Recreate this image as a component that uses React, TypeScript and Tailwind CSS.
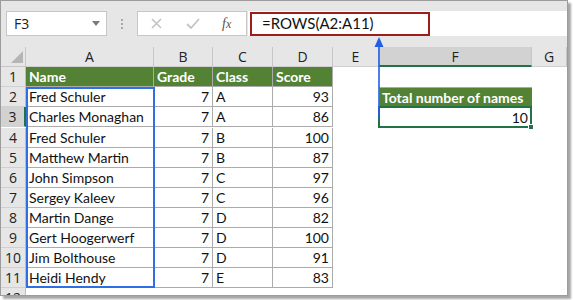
import React from 'react';

// ---- data ----

type Row = { name: string; grade: number; cls: string; score: number };

const ROWS: Row[] = [
  { name: 'Fred Schuler', grade: 7, cls: 'A', score: 93 },
  { name: 'Charles Monaghan', grade: 7, cls: 'A', score: 86 },
  { name: 'Fred Schuler', grade: 7, cls: 'B', score: 100 },
  { name: 'Matthew Martin', grade: 7, cls: 'B', score: 87 },
  { name: 'John Simpson', grade: 7, cls: 'C', score: 97 },
  { name: 'Sergey Kaleev', grade: 7, cls: 'C', score: 96 },
  { name: 'Martin Dange', grade: 7, cls: 'D', score: 82 },
  { name: 'Gert Hoogerwerf', grade: 7, cls: 'D', score: 100 },
  { name: 'Jim Bolthouse', grade: 7, cls: 'D', score: 91 },
  { name: 'Heidi Hendy', grade: 7, cls: 'E', score: 83 },
];

const CELL_FONT = "font-['Lato','Liberation_Sans',sans-serif] text-[14px]";
const HDR_FONT = "font-['Open_Sans','Liberation_Sans',sans-serif] text-[13px] text-[#222]";

// ---- toolbar ----

const Toolbar = () => (
  <div className="flex h-[46px] items-start bg-[#e6e6e6] pt-[10px]">
    <div className="ml-[5px] flex h-[25px] w-[101px] items-center justify-between border border-[#c6c6c6] bg-white pl-[7px] pr-[6px]">
      <span className={`${HDR_FONT} text-[14px]`}>F3</span>
      <svg width="8" height="5" viewBox="0 0 8 5">
        <path d="M0 0h8L4 5z" fill="#7a7a7a" />
      </svg>
    </div>
    <div className="ml-[14px] mt-[8px] flex flex-col gap-[2px]">
      <span className="h-[2px] w-[2px] bg-[#a8a8a8]" />
      <span className="h-[2px] w-[2px] bg-[#a8a8a8]" />
      <span className="h-[2px] w-[2px] bg-[#a8a8a8]" />
    </div>
    <div className="ml-[14px] flex h-[25px] w-[110px] items-center border border-[#c6c6c6] bg-white">
      <svg className="ml-[13px]" width="11" height="11" viewBox="0 0 11 11">
        <path d="M1 1l9 9M10 1l-9 9" stroke="#c4c4c4" strokeWidth="1.6" />
      </svg>
      <svg className="ml-[24px]" width="14" height="11" viewBox="0 0 14 11">
        <path d="M1 6l4 4 8-9" stroke="#c4c4c4" strokeWidth="1.8" fill="none" />
      </svg>
      <span className="ml-[22px] font-['Liberation_Serif',serif] text-[14px] italic text-[#555]">
        f<span className="text-[12px]">x</span>
      </span>
    </div>
    <div className="ml-[1px] flex h-[25px] flex-1 items-center bg-white pl-[2px]">
      <div className="flex h-[24px] w-[180px] items-center border-2 border-[#a01c1c] pl-[10px]">
        <span className={`${CELL_FONT} text-[15px] text-[#111]`}>=ROWS(A2:A11)</span>
      </div>
    </div>
  </div>
);

// ---- sheet ----

const COLS = ['A', 'B', 'C', 'D', 'E', 'F', 'G'];
const WIDTHS = ['w-[128px]', 'w-[59px]', 'w-[60px]', 'w-[60px]', 'w-[46px]', 'w-[153px]', 'flex-1'];

const RowHeader = ({ n, active }: { n: number; active?: boolean }) => (
  <div
    className={`flex h-[20px] w-[25px] shrink-0 items-center justify-center border-b border-[#d0d0d0] ${HDR_FONT} text-[14px] ${
      active ? 'border-r-2 border-r-[#217346] bg-[#d2d2d2]' : 'border-r border-r-[#bdbdbd] bg-[#e6e6e6]'
    }`}
  >
    {n}
  </div>
);

const HeaderRow = () => (
  <div className="flex h-[20px] bg-[#e6e6e6]">
    <div className="relative w-[25px] shrink-0 border-r border-b border-[#c6c6c6]">
      <svg className="absolute bottom-[3px] right-[2px]" width="12" height="12" viewBox="0 0 12 12">
        <path d="M12 0v12H0z" fill="#b5b5b5" />
      </svg>
    </div>
    {COLS.map((c, i) => (
      <div
        key={c}
        className={`${WIDTHS[i]} flex shrink-0 items-center justify-center border-r border-[#c6c6c6] ${HDR_FONT} text-[14px] ${
          c === 'F' ? 'border-b-2 border-b-[#217346] bg-[#d2d2d2]' : 'border-b border-b-[#d0d0d0]'
        }`}
      >
        {c}
      </div>
    ))}
  </div>
);

const cell = 'h-[20px] shrink-0 border-r border-b border-[#ababab] px-[3px] leading-[20px] whitespace-nowrap';
const head = `${cell} bg-[#548235] font-bold text-white`;

const Sheet = () => (
  <div className={`relative flex-1 overflow-hidden bg-white ${CELL_FONT}`}>
    <HeaderRow />

    <div className="flex">
      <RowHeader n={1} />
      <div className={`${head} w-[128px]`}>Name</div>
      <div className={`${head} w-[59px]`}>Grade</div>
      <div className={`${head} w-[60px]`}>Class</div>
      <div className={`${head} w-[60px]`}>Score</div>
    </div>

    {ROWS.map((r, i) => (
      <div key={i} className="flex">
        <RowHeader n={i + 2} active={i === 1} />
        <div className={`${cell} w-[128px] text-[#111]`}>{r.name}</div>
        <div className={`${cell} w-[59px] text-right text-[#111]`}>{r.grade}</div>
        <div className={`${cell} w-[60px] text-[#111]`}>{r.cls}</div>
        <div className={`${cell} w-[60px] text-right text-[#111]`}>{r.score}</div>
        <div className="w-[46px] shrink-0" />
        {i === 0 && (
          <div className="h-[20px] w-[153px] shrink-0 border-t border-l border-[#ababab] bg-[#548235] px-[2px] leading-[19px] font-bold whitespace-nowrap text-white">
            Total number of names
          </div>
        )}
        {i === 1 && (
          <div className="relative -mt-[1px] h-[22px] w-[154px] shrink-0 -ml-[1px] border-2 border-[#217346] px-[2px] text-right leading-[19px] text-[#111]">
            10
            <span className="absolute -right-[4px] -bottom-[4px] h-[6px] w-[6px] border border-white bg-[#217346]" />
          </div>
        )}
      </div>
    ))}

    <div className="flex">
      <RowHeader n={12} />
    </div>

    {/* selection marquee A2:A11 */}
    <div className="pointer-events-none absolute top-[40px] left-[25px] h-[201px] w-[129px] border-2 border-[#2f6fe6]" />
  </div>
);

export default function App() {
  return (
    <div className="relative h-[300px] w-[573px] bg-white">
      <div className="flex h-[296px] w-[568px] flex-col overflow-hidden border border-[#9c9c9c] bg-[#e6e6e6] shadow-[3px_3px_2px_rgba(0,0,0,0.35)]">
        <Toolbar />
        <Sheet />
      </div>

      {/* pointer arrow from F3 up to the formula */}
      <svg className="pointer-events-none absolute top-[37px] left-[372px]" width="14" height="81" viewBox="0 0 14 81">
        <path d="M7 4v77" stroke="#1f5fe6" strokeWidth="1.6" />
        <path d="M7 0l4.5 10h-9z" fill="#1f5fe6" />
      </svg>
    </div>
  );
}
